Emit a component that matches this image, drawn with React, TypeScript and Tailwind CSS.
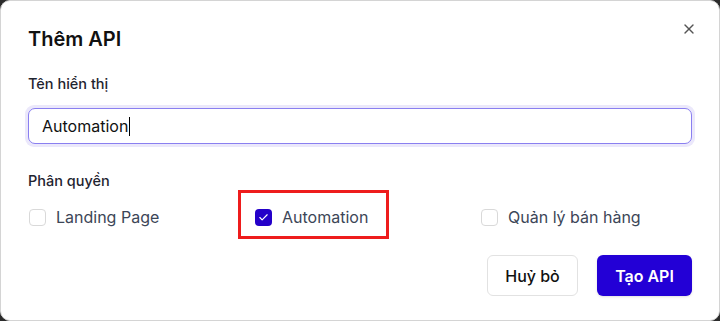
import { X, Check } from "lucide-react"

const perms = [
  { label: "Landing Page", checked: false },
  { label: "Automation", checked: true },
  { label: "Quản lý bán hàng", checked: false },
]

export default function App() {
  return (
    <div className="w-[720px] h-[321px] bg-[#2b2b2b] font-['Inter',sans-serif]">
      <div className="relative h-full rounded-[10px] border border-[#d4d4d4] bg-white px-[27px] pt-[25px]">
        {/* Close */}
        <button className="absolute right-[22px] top-[20px] text-[#555]">
          <X className="w-[16px] h-[16px]" strokeWidth={2} />
        </button>

        <h2 className="text-[20px] leading-[26px] font-semibold text-[#111]">Thêm API</h2>

        <label className="mt-[22px] block text-[14.5px] leading-[20px] font-medium text-[#1f2430]">Tên hiển thị</label>
        <div className="mt-[11px] rounded-[9px] bg-[#ebe8fb] p-[3px] -mx-[3px]">
          <div className="flex h-[36px] items-center rounded-[7px] border border-[#8a7ff0] bg-white px-[13px] text-[16px] text-[#111]">
            Automation
            <span className="ml-[1px] inline-block h-[19px] w-[1px] bg-black" />
          </div>
        </div>

        <div className="mt-[24px] text-[14.5px] leading-[20px] font-medium text-[#1f2430]">Phân quyền</div>

        <div className="relative mt-[16px] grid grid-cols-[226px_226px_1fr]">
          {perms.map((p) => (
            <div key={p.label} className="flex items-center gap-[10px] pl-[1px]">
              {p.checked ? (
                <span className="flex h-[17px] w-[17px] items-center justify-center rounded-[4px] bg-[#2400c9]">
                  <Check className="h-[11px] w-[11px] text-white" strokeWidth={2.5} />
                </span>
              ) : (
                <span className="h-[17px] w-[17px] rounded-[4px] border border-[#d9d9d9] bg-white" />
              )}
              <span className="text-[16px] leading-[20px] text-[#3c4657]">{p.label}</span>
            </div>
          ))}
          {/* highlight annotation */}
          <div className="pointer-events-none absolute left-[210px] top-[-17px] h-[49px] w-[151px] border-[3px] border-[#ee1c1c]" />
        </div>

        <div className="mt-[28px] flex justify-end gap-[19px]">
          <button className="h-[41px] w-[91px] rounded-[6px] border border-[#e2e2e2] bg-white text-[16px] font-medium text-[#111]">
            Huỷ bỏ
          </button>
          <button className="h-[41px] w-[95px] rounded-[6px] bg-[#2300d6] text-[16px] font-semibold text-white shadow-sm">
            Tạo API
          </button>
        </div>
      </div>
    </div>
  )
}
